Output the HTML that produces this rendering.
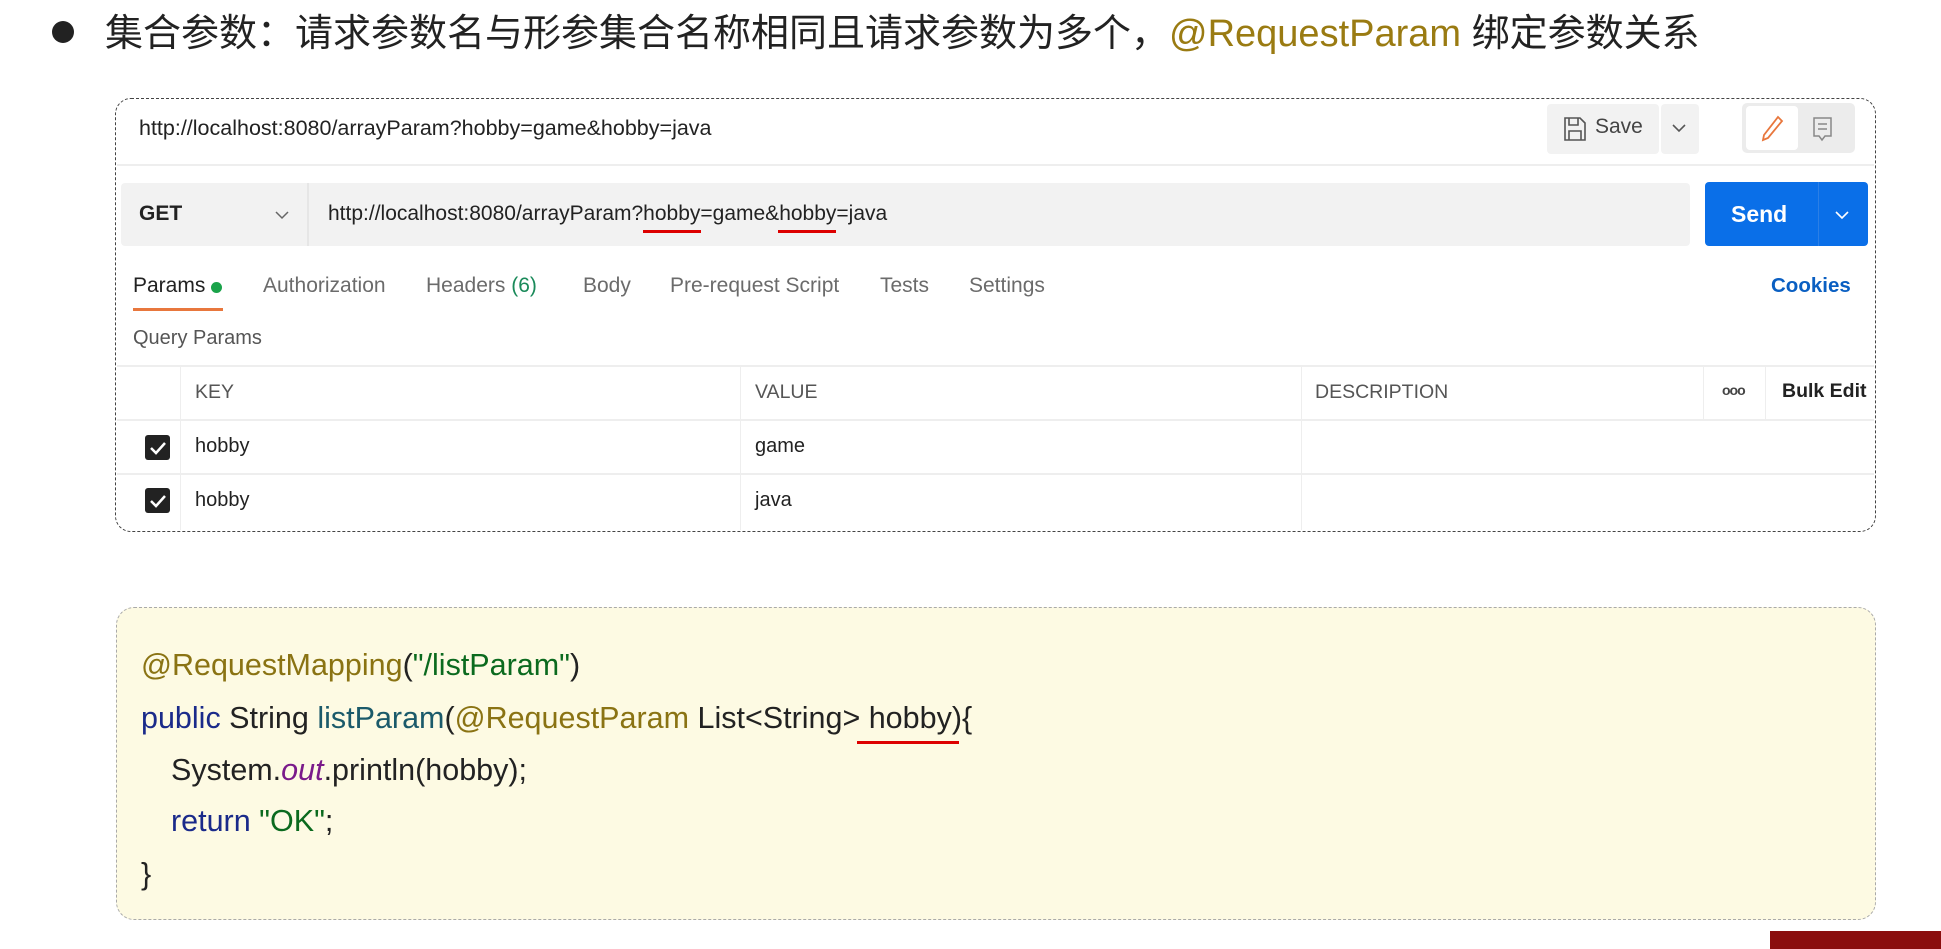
<!DOCTYPE html>
<html><head><meta charset="utf-8">
<style>
*{box-sizing:border-box;margin:0;padding:0}
body{width:1941px;height:949px;background:#fff;position:relative;overflow:hidden;font-family:"Liberation Sans","Noto Sans CJK SC",sans-serif;color:#212121}
.a{position:absolute;white-space:nowrap}
.title{left:105px;top:11px;font-size:38px;line-height:46px;color:#222}
.title span{color:#9a7b12}
.box{left:115px;top:98px;width:1761px;height:434px;border:1.5px dashed #444;border-radius:16px}
.s{font-size:21px;color:#222}
.tab{font-size:21px;color:#6b6b6b;top:274px}
.hdr{font-size:19.5px;color:#555;top:381px}
.code{font-size:30.5px;line-height:36px}
</style></head><body>
<div class="a" style="left:52px;top:21px;width:22px;height:22px;border-radius:50%;background:#222"></div>
<div class="a title">集合参数：请求参数名与形参集合名称相同且请求参数为多个，<span>@RequestParam</span> 绑定参数关系</div>

<div class="a box"></div>
<div class="a s" style="left:139px;top:116px;font-size:21.5px">http://localhost:8080/arrayParam?hobby=game&amp;hobby=java</div>
<!-- save -->
<div class="a" style="left:1547px;top:104px;width:112px;height:50px;background:#f2f2f2;border-radius:4px"></div>
<div class="a" style="left:1661px;top:104px;width:38px;height:50px;background:#f2f2f2;border-radius:4px"></div>
<svg class="a" style="left:1563px;top:116px" width="24" height="26" viewBox="0 0 24 26"><path d="M2 2h15l5 5v17H2z M6 2v7h9V2 M6 24v-9h12v9" fill="none" stroke="#555" stroke-width="1.6"/></svg>
<div class="a" style="left:1595px;top:115px;font-size:21px;color:#444">Save</div>
<svg class="a" style="left:1671px;top:122px" width="16" height="12"><path d="M2 3l6 6 6-6" fill="none" stroke="#555" stroke-width="1.6"/></svg>
<div class="a" style="left:1742px;top:103px;width:113px;height:50px;background:#ececec;border-radius:5px"></div>
<div class="a" style="left:1746px;top:106px;width:52px;height:44px;background:#fff;border-radius:4px"></div>
<svg class="a" style="left:1760px;top:114px" width="24" height="28"><path d="M18 3l4 4L8 24l-5 2 1-5z" fill="none" stroke="#e8773d" stroke-width="1.8"/></svg>
<svg class="a" style="left:1812px;top:116px" width="22" height="26"><path d="M2 2h17v18h-6l-3 4-3-4H2z M6 8h9 M6 13h9" fill="none" stroke="#888" stroke-width="1.5"/></svg>
<div class="a" style="left:117px;top:164px;width:1757px;height:2px;background:#eee"></div>
<!-- get row -->
<div class="a" style="left:121px;top:183px;width:1569px;height:63px;background:#f2f2f2;border-radius:4px"></div>
<div class="a" style="left:307px;top:183px;width:2px;height:63px;background:#e6e6e6"></div>
<div class="a" style="left:139px;top:202px;font-size:21px;font-weight:bold;color:#222">GET</div>
<svg class="a" style="left:274px;top:209px" width="16" height="12"><path d="M2 3l6 6 6-6" fill="none" stroke="#666" stroke-width="1.5"/></svg>
<div class="a s" style="left:328px;top:202px">http://localhost:8080/arrayParam?hobby=game&amp;hobby=java</div>
<div class="a" style="left:643px;top:230px;width:58px;height:3px;background:#d00"></div>
<div class="a" style="left:778px;top:230px;width:58px;height:3px;background:#d00"></div>
<div class="a" style="left:1705px;top:182px;width:163px;height:64px;background:#0a6fe8;border-radius:4px"></div>
<div class="a" style="left:1818px;top:182px;width:1px;height:64px;background:#2b7fe6"></div>
<div class="a" style="left:1731px;top:201px;font-size:23px;font-weight:bold;color:#fff">Send</div>
<svg class="a" style="left:1834px;top:209px" width="16" height="12"><path d="M2 3l6 6 6-6" fill="none" stroke="#fff" stroke-width="1.6"/></svg>
<!-- tabs -->
<div class="a tab" style="left:133px;color:#222">Params</div>
<div class="a" style="left:211px;top:282px;width:11px;height:11px;border-radius:50%;background:#1aa34a"></div>
<div class="a" style="left:133px;top:308px;width:90px;height:3px;background:#e8773d"></div>
<div class="a tab" style="left:263px">Authorization</div>
<div class="a tab" style="left:426px">Headers <span style="color:#1a8a5a">(6)</span></div>
<div class="a tab" style="left:583px">Body</div>
<div class="a tab" style="left:670px">Pre-request Script</div>
<div class="a tab" style="left:880px">Tests</div>
<div class="a tab" style="left:969px">Settings</div>
<div class="a tab" style="left:1771px;color:#0a5fc2;font-weight:bold;font-size:20.5px">Cookies</div>
<div class="a" style="left:133px;top:327px;font-size:20px;color:#555">Query Params</div>
<!-- table -->
<div class="a" style="left:117px;top:365px;width:1757px;height:2px;background:#eee"></div>
<div class="a" style="left:117px;top:419px;width:1757px;height:2px;background:#eee"></div>
<div class="a" style="left:117px;top:473px;width:1757px;height:2px;background:#eee"></div>
<div class="a" style="left:180px;top:366px;width:1px;height:164px;background:#eee"></div>
<div class="a" style="left:740px;top:366px;width:1px;height:164px;background:#eee"></div>
<div class="a" style="left:1301px;top:366px;width:1px;height:164px;background:#eee"></div>
<div class="a" style="left:1703px;top:366px;width:1px;height:54px;background:#eee"></div>
<div class="a" style="left:1765px;top:366px;width:1px;height:54px;background:#eee"></div>
<div class="a hdr" style="left:195px">KEY</div>
<div class="a hdr" style="left:755px">VALUE</div>
<div class="a hdr" style="left:1315px">DESCRIPTION</div>
<div class="a" style="left:1722px;top:382px;font-size:14px;color:#444;font-weight:bold;letter-spacing:-1px">ooo</div>
<div class="a" style="left:1782px;top:380px;font-size:19.5px;font-weight:bold;color:#222">Bulk Edit</div>
<div class="a" style="left:145px;top:435px;width:25px;height:25px;background:#222;border-radius:3px"></div>
<svg class="a" style="left:145px;top:435px" width="25" height="25"><path d="M6 13l5 5 9-10" fill="none" stroke="#fff" stroke-width="2.5"/></svg>
<div class="a" style="left:145px;top:488px;width:25px;height:25px;background:#222;border-radius:3px"></div>
<svg class="a" style="left:145px;top:488px" width="25" height="25"><path d="M6 13l5 5 9-10" fill="none" stroke="#fff" stroke-width="2.5"/></svg>
<div class="a s" style="left:195px;top:435px;font-size:20px">hobby</div>
<div class="a s" style="left:755px;top:435px;font-size:20px">game</div>
<div class="a s" style="left:195px;top:489px;font-size:20px">hobby</div>
<div class="a s" style="left:755px;top:489px;font-size:20px">java</div>

<!-- code -->
<div class="a" style="left:116px;top:607px;width:1760px;height:313px;background:#fdfae3;border:1.5px dashed #aaa;border-radius:18px"></div>
<div class="a code" style="left:141px;top:647px"><span style="color:#8a7313">@RequestMapping</span><span style="color:#222">(</span><span style="color:#0b6a1e">"/listParam"</span><span style="color:#222">)</span></div>
<div class="a code" style="left:141px;top:700px;color:#222"><span style="color:#1a2a8a">public</span> String <span style="color:#1b5a6a">listParam</span>(<span style="color:#8a7313">@RequestParam</span> List&lt;String&gt; hobby){</div>
<div class="a" style="left:857px;top:741px;width:102px;height:3px;background:#d00"></div>
<div class="a code" style="left:171px;top:752px;color:#222">System.<i style="color:#7a1a8a">out</i>.println(hobby);</div>
<div class="a code" style="left:171px;top:803px;color:#222"><span style="color:#1a2a8a">return</span> <span style="color:#0b6a1e">"OK"</span>;</div>
<div class="a code" style="left:141px;top:856px;color:#222">}</div>
<div class="a" style="left:1770px;top:931px;width:171px;height:18px;background:#8a0e0e"></div>
</body></html>
